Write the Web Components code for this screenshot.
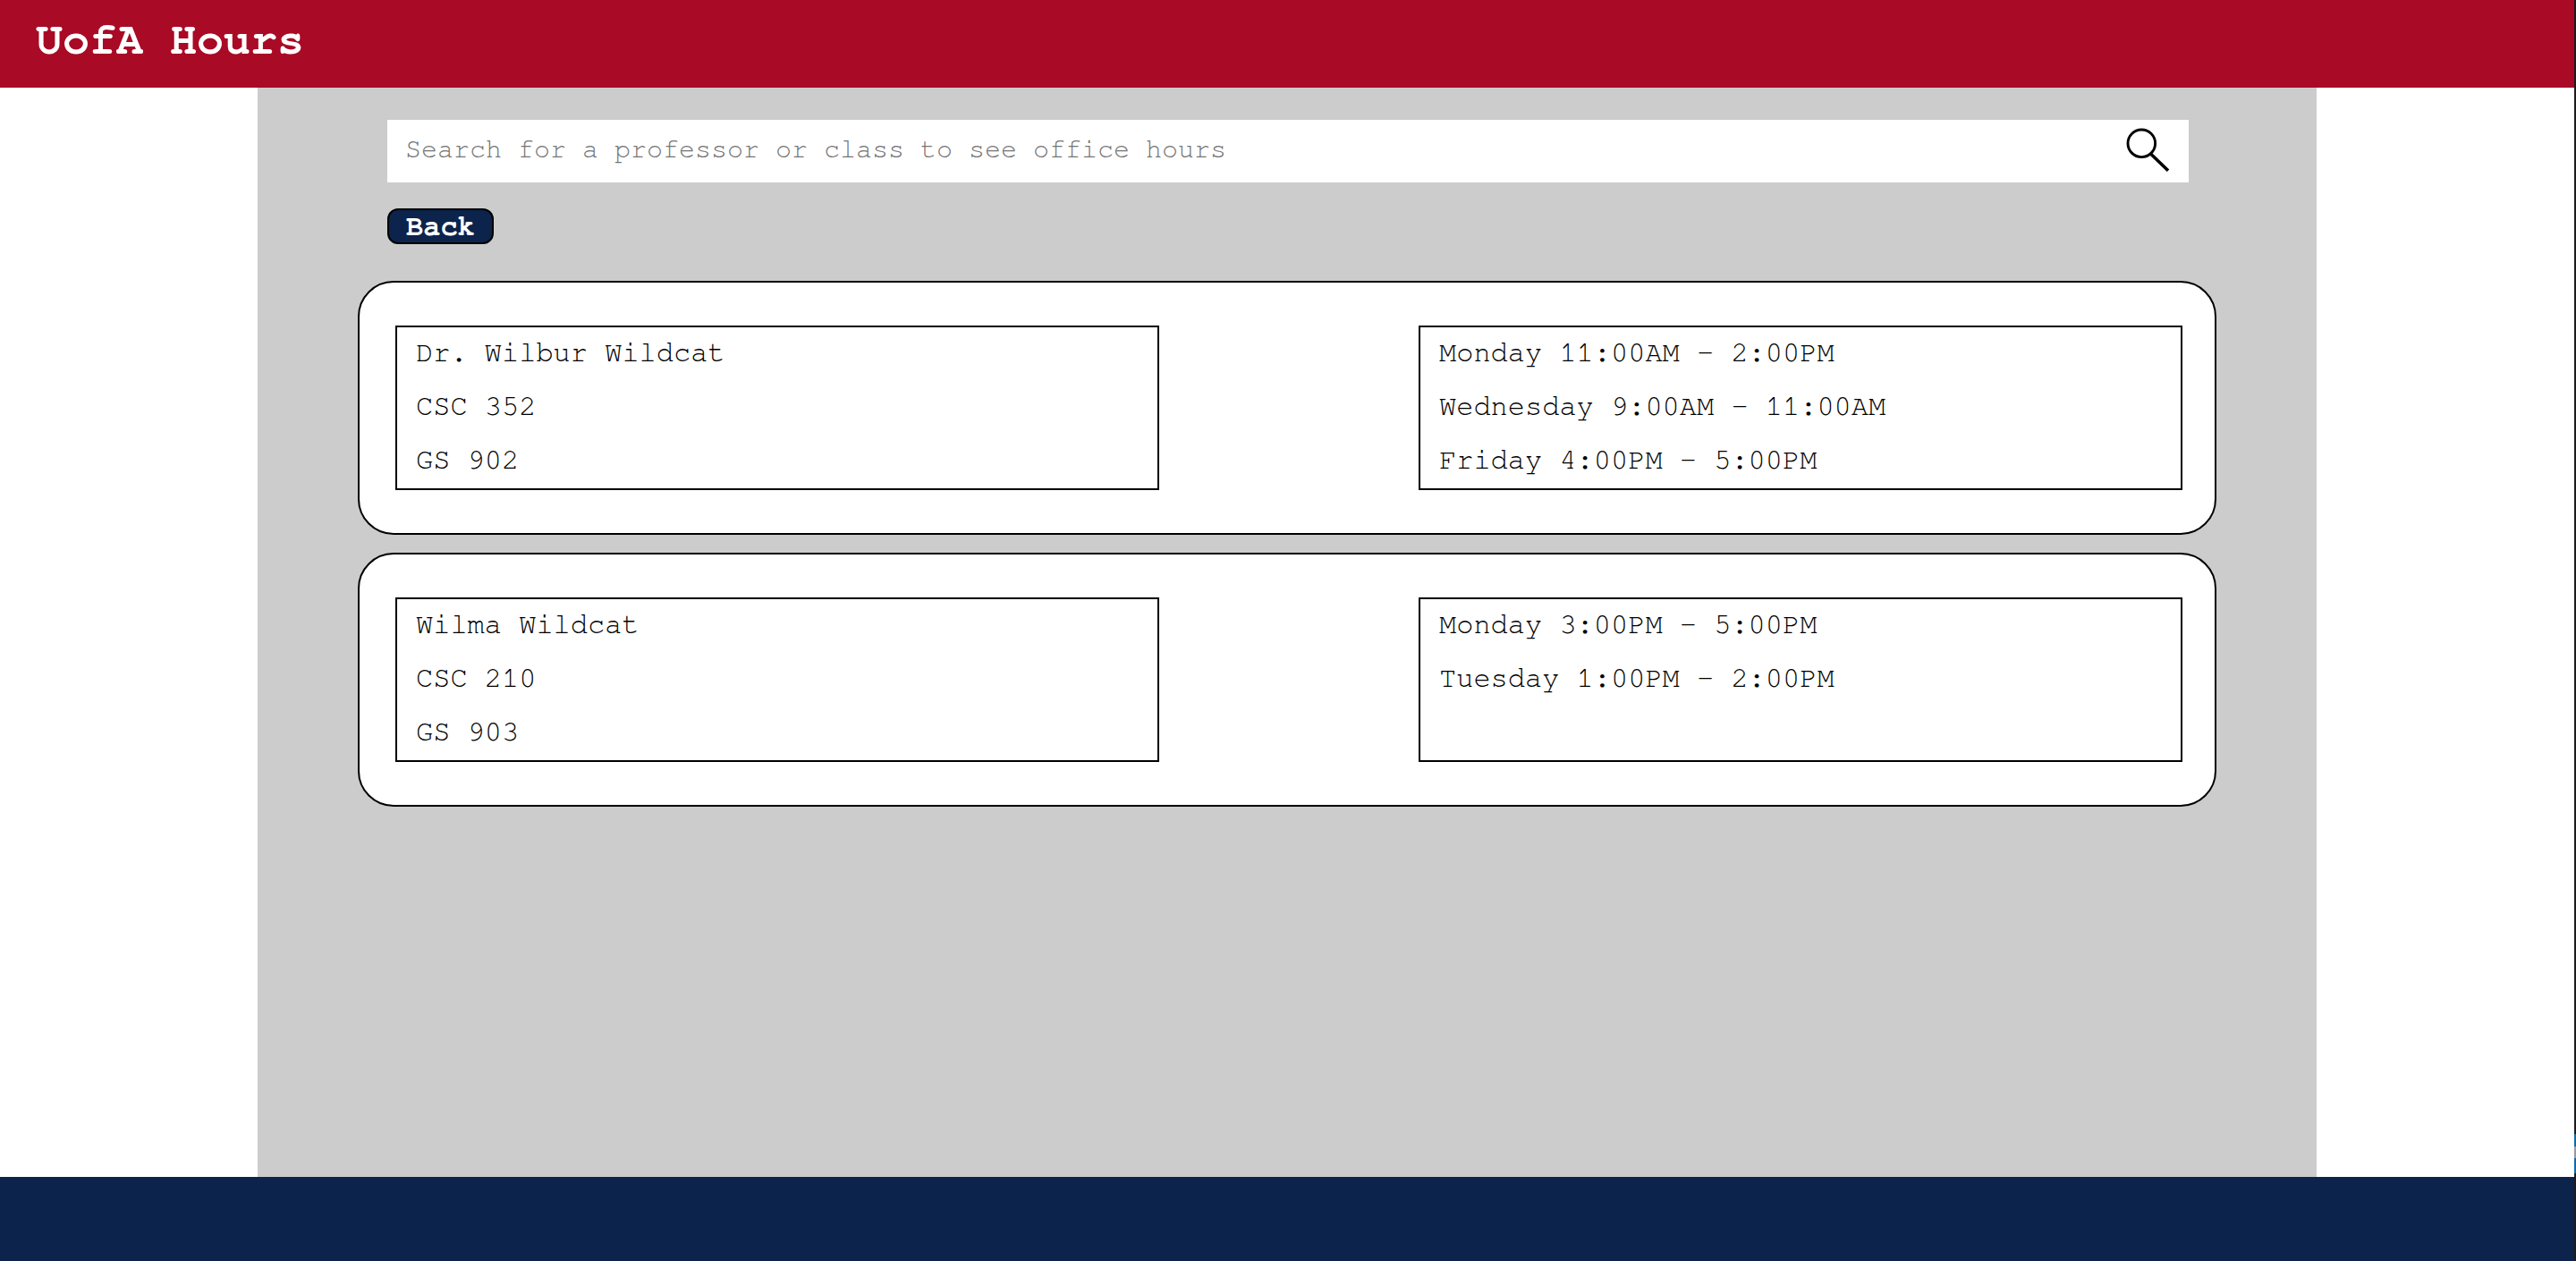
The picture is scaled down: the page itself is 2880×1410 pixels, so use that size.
<!DOCTYPE html>
<html lang="en">
<head>
<meta charset="utf-8">
<title>UofA Hours</title>
<style>
  html, body { margin: 0; padding: 0; height: 100%; background: #fff; }
  body { font-family: "Liberation Mono", "Courier New", monospace; }
</style>
</head>
<body>
<template id="t-page">
  <style>
    :host { display: flex; flex-direction: column; position: relative; width: 2880px; height: 1410px; overflow: hidden; box-sizing: border-box; padding-right: 2px; background: #fff; }
    .middle { flex: 1; min-height: 0; display: flex; padding-left: 288px; }
    .edge { position: absolute; top: 0; right: 0; width: 2px; height: 100%; background: #1c1c1e; }
    .edge i { position: absolute; left: 0; top: 1268px; width: 2px; height: 44px; background: #0a6cad; }
    .edge b { position: absolute; left: 0; top: 1282px; width: 2px; height: 13px; background: #9a9a9a; }
  </style>
  <slot name="header"></slot>
  <div class="middle"><slot></slot></div>
  <slot name="footer"></slot>
  <div class="edge"><i></i><b></b></div>
</template>

<template id="t-header">
  <style>
    :host { display: flex; align-items: flex-start; height: 98px; box-sizing: border-box; padding: 17px 0 0 40px; background: #a90a25; color: #fff; font: bold 50px/57px "Nimbus Mono PS", "FreeMono", "Courier 10 Pitch", "Liberation Mono", "Courier New", monospace; }
  </style>
  <slot></slot>
</template>

<template id="t-main">
  <style>
    :host { display: flex; flex-direction: column; align-items: flex-start; width: 2302px; box-sizing: border-box; padding-top: 36px; background: #ccc; }
    .tools { display: flex; flex-direction: column; align-items: flex-start; gap: 29px; margin: 0 0 41px 145px; }
    .cards { display: flex; flex-direction: column; gap: 20px; margin-left: 112px; }
  </style>
  <div class="tools"><slot name="tools"></slot></div>
  <div class="cards"><slot></slot></div>
</template>

<template id="t-search">
  <style>
    :host { display: flex; align-items: center; justify-content: space-between; width: 2014px; height: 70px; box-sizing: border-box; padding: 0 21px 4px 20px; background: #fff; color: #757575; font: 30px/36px "Nimbus Mono PS", "FreeMono", "Courier 10 Pitch", "Liberation Mono", "Courier New", monospace; }
    svg { display: block; width: 52px; height: 52px; flex: none; margin-bottom: -4px; }
  </style>
  <slot></slot>
  <svg viewBox="0 0 52 52" fill="none" stroke="#000" aria-hidden="true">
    <circle cx="20.3" cy="17.3" r="15.3" stroke-width="2.9"/>
    <line x1="31" y1="29.5" x2="50" y2="47.7" stroke-width="3.6"/>
  </svg>
</template>

<template id="t-back">
  <style>
    :host { display: block; box-sizing: border-box; width: 119px; height: 40px; padding: 0 19px; border: 2px solid #000; border-radius: 12px; background: #0c234b; color: #fff; font: bold 32px/36px "Nimbus Mono PS", "FreeMono", "Courier 10 Pitch", "Liberation Mono", "Courier New", monospace; }
  </style>
  <slot></slot>
</template>

<template id="t-card">
  <style>
    :host { display: grid; grid-template-columns: 854px 854px; justify-content: space-between; width: 2078px; box-sizing: border-box; padding: 48px 36px 48px 40px; border: 2px solid #000; border-radius: 40px; background: #fff; }
  </style>
  <slot></slot>
</template>

<template id="t-box">
  <style>
    :host { display: flex; flex-direction: column; min-height: 184px; box-sizing: border-box; padding: 0 21px; border: 2px solid #000; background: #fff; color: #000; font: 32px/60px "Nimbus Mono PS", "FreeMono", "Courier 10 Pitch", "Liberation Mono", "Courier New", monospace; white-space: pre; }
    ::slotted(div:first-child) { margin-top: -2px; }
  </style>
  <slot></slot>
</template>

<template id="t-footer">
  <style>
    :host { display: block; height: 94px; background: #0c234b; }
  </style>
</template>

<script>
  const define = (name, tpl) => customElements.define(name, class extends HTMLElement {
    constructor() {
      super();
      this.attachShadow({ mode: 'open' }).appendChild(document.getElementById(tpl).content.cloneNode(true));
    }
  });
  define('hours-page', 't-page');
  define('hours-header', 't-header');
  define('hours-main', 't-main');
  define('hours-search', 't-search');
  define('hours-back', 't-back');
  define('hours-card', 't-card');
  define('hours-box', 't-box');
  define('hours-footer', 't-footer');
</script>

<hours-page>
  <hours-header slot="header">UofA Hours</hours-header>
  <hours-main>
    <hours-search slot="tools">Search for a professor or class to see office hours</hours-search>
    <hours-back slot="tools">Back</hours-back>
    <hours-card>
      <hours-box><div>Dr. Wilbur Wildcat</div><div>CSC 352</div><div>GS 902</div></hours-box>
      <hours-box><div>Monday 11:00AM - 2:00PM</div><div>Wednesday 9:00AM - 11:00AM</div><div>Friday 4:00PM - 5:00PM</div></hours-box>
    </hours-card>
    <hours-card>
      <hours-box><div>Wilma Wildcat</div><div>CSC 210</div><div>GS 903</div></hours-box>
      <hours-box><div>Monday 3:00PM - 5:00PM</div><div>Tuesday 1:00PM - 2:00PM</div></hours-box>
    </hours-card>
  </hours-main>
  <hours-footer slot="footer"></hours-footer>
</hours-page>
</body>
</html>
